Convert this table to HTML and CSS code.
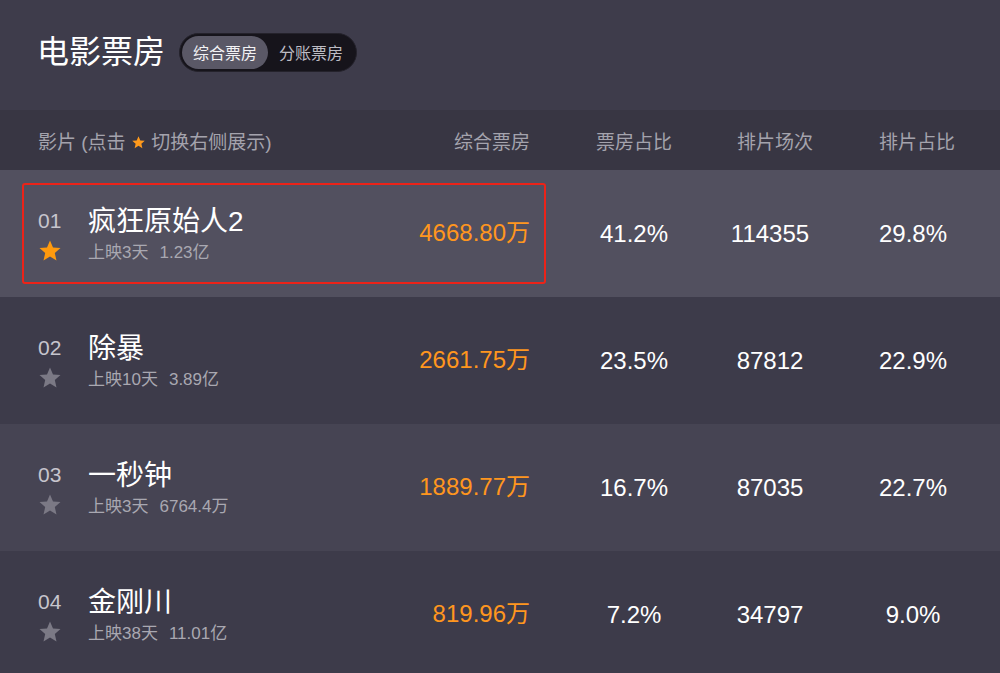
FILE: index.html
```html
<!DOCTYPE html>
<html lang="zh-CN">
<head>
<meta charset="utf-8">
<title>电影票房</title>
<link rel="stylesheet" href="styles.css">
</head>
<body>
<div class="page">
  <header class="top">
    <h1 class="title">电影票房</h1>
    <div class="toggle">
      <span class="tab active">综合票房</span>
      <span class="tab">分账票房</span>
    </div>
  </header>

  <div class="row head">
    <div class="c-movie">影片 (点击 <svg class="mini-star" viewBox="0 0 24 24"><polygon points="12,2 14.9,8.6 22,9.3 16.6,14 18.2,21 12,17.3 5.8,21 7.4,14 2,9.3 9.1,8.6"/></svg> 切换右侧展示)</div>
    <div class="c-box">综合票房</div>
    <div class="c-num c-p1">票房占比</div>
    <div class="c-num h-p2">排片场次</div>
    <div class="c-num h-p3">排片占比</div>
  </div>

  <div class="row item hl">
    <div class="c-rank"><div class="rank">01</div><svg class="star on" viewBox="0 0 24 24"><polygon points="12,1.5 15,8.4 22.5,9.1 16.8,14.1 18.5,21.5 12,17.6 5.5,21.5 7.2,14.1 1.5,9.1 9,8.4"/></svg></div>
    <div class="c-name"><div class="name">疯狂原始人2</div><div class="sub">上映3天<span class="total">1.23亿</span></div></div>
    <div class="c-box money">4668.80万</div>
    <div class="c-num c-p1 val">41.2%</div>
    <div class="c-num val">114355</div>
    <div class="c-num val">29.8%</div>
    <div class="focus"></div>
  </div>

  <div class="row item dark">
    <div class="c-rank"><div class="rank">02</div><svg class="star" viewBox="0 0 24 24"><polygon points="12,1.5 15,8.4 22.5,9.1 16.8,14.1 18.5,21.5 12,17.6 5.5,21.5 7.2,14.1 1.5,9.1 9,8.4"/></svg></div>
    <div class="c-name"><div class="name">除暴</div><div class="sub">上映10天<span class="total">3.89亿</span></div></div>
    <div class="c-box money">2661.75万</div>
    <div class="c-num c-p1 val">23.5%</div>
    <div class="c-num val">87812</div>
    <div class="c-num val">22.9%</div>
  </div>

  <div class="row item mid">
    <div class="c-rank"><div class="rank">03</div><svg class="star" viewBox="0 0 24 24"><polygon points="12,1.5 15,8.4 22.5,9.1 16.8,14.1 18.5,21.5 12,17.6 5.5,21.5 7.2,14.1 1.5,9.1 9,8.4"/></svg></div>
    <div class="c-name"><div class="name">一秒钟</div><div class="sub">上映3天<span class="total">6764.4万</span></div></div>
    <div class="c-box money">1889.77万</div>
    <div class="c-num c-p1 val">16.7%</div>
    <div class="c-num val">87035</div>
    <div class="c-num val">22.7%</div>
  </div>

  <div class="row item dark">
    <div class="c-rank"><div class="rank">04</div><svg class="star" viewBox="0 0 24 24"><polygon points="12,1.5 15,8.4 22.5,9.1 16.8,14.1 18.5,21.5 12,17.6 5.5,21.5 7.2,14.1 1.5,9.1 9,8.4"/></svg></div>
    <div class="c-name"><div class="name">金刚川</div><div class="sub">上映38天<span class="total">11.01亿</span></div></div>
    <div class="c-box money">819.96万</div>
    <div class="c-num c-p1 val">7.2%</div>
    <div class="c-num val">34797</div>
    <div class="c-num val">9.0%</div>
  </div>
</div>
</body>
</html>
```

FILE: styles.css
```css
* { box-sizing: border-box; }
html, body {
  margin: 0;
  padding: 0;
  background: #3d3b4a;
  height: 673px;
  overflow: hidden;
}
body {
  font-family: "Liberation Sans", "Noto Sans CJK SC", sans-serif;
  color: #ffffff;
}
.page { width: 1000px; }

.top {
  height: 110px;
  display: flex;
  align-items: center;
  padding-left: 37px;
  padding-bottom: 6px;
  gap: 14px;
  background: #3e3c4b;
}
.title {
  margin: 0;
  font-size: 32px;
  font-weight: normal;
  line-height: 40px;
  color: #ffffff;
}
.toggle {
  display: flex;
  align-items: center;
  height: 39px;
  padding: 2px;
  border-radius: 20px;
  background: #16141b;
  border: 1px solid #24222b;
}
.tab {
  display: flex;
  align-items: center;
  justify-content: center;
  height: 33px;
  width: 86px;
  font-size: 16px;
  color: #bdbcc4;
  border-radius: 17px;
}
.tab.active {
  background: #5a5866;
  color: #f2f2f4;
}

.row {
  display: grid;
  grid-template-columns: 50px 312px 130px 174px 132px 154px;
  padding-left: 38px;
  align-items: center;
}
.head {
  height: 60px;
  background: #383643;
  color: #a4a3ad;
  font-size: 19px;
}
.head .c-movie { grid-column: 1 / 3; }
.mini-star {
  width: 15px;
  height: 15px;
  fill: #ff9a1c;
  vertical-align: -1px;
}
.c-box { text-align: right; }
.c-num { text-align: center; }
.c-p1 { padding-left: 34px; }
.h-p2 { padding-left: 10px; }
.h-p3 { padding-left: 8px; }

.item {
  position: relative;
  height: 127px;
}
.hl { background: #52505f; }
.dark { background: #3d3b4a; }
.mid { background: #464453; }

.c-rank {
  display: flex;
  flex-direction: column;
  padding-top: 3px;
}
.rank {
  font-size: 21px;
  line-height: 28px;
  color: #c6c5cd;
}
.star {
  width: 24px;
  height: 24px;
  margin-top: 4px;
  fill: #7b7985;
}
.star.on { fill: #ff9a0d; }

.c-name { padding-top: 4px; }
.name {
  font-size: 28px;
  line-height: 32px;
  color: #ffffff;
}
.sub {
  margin-top: 3px;
  font-size: 17px;
  line-height: 24px;
  color: #a9a8b1;
}
.total { margin-left: 11px; }

.money {
  font-size: 24px;
  color: #ff961e;
  padding-bottom: 6px;
}
.val {
  font-size: 24px;
  color: #ffffff;
}

.focus {
  position: absolute;
  left: 22px;
  top: 13px;
  width: 524px;
  height: 101px;
  border: 2px solid #ec2318;
  border-radius: 3px;
  pointer-events: none;
}
```
